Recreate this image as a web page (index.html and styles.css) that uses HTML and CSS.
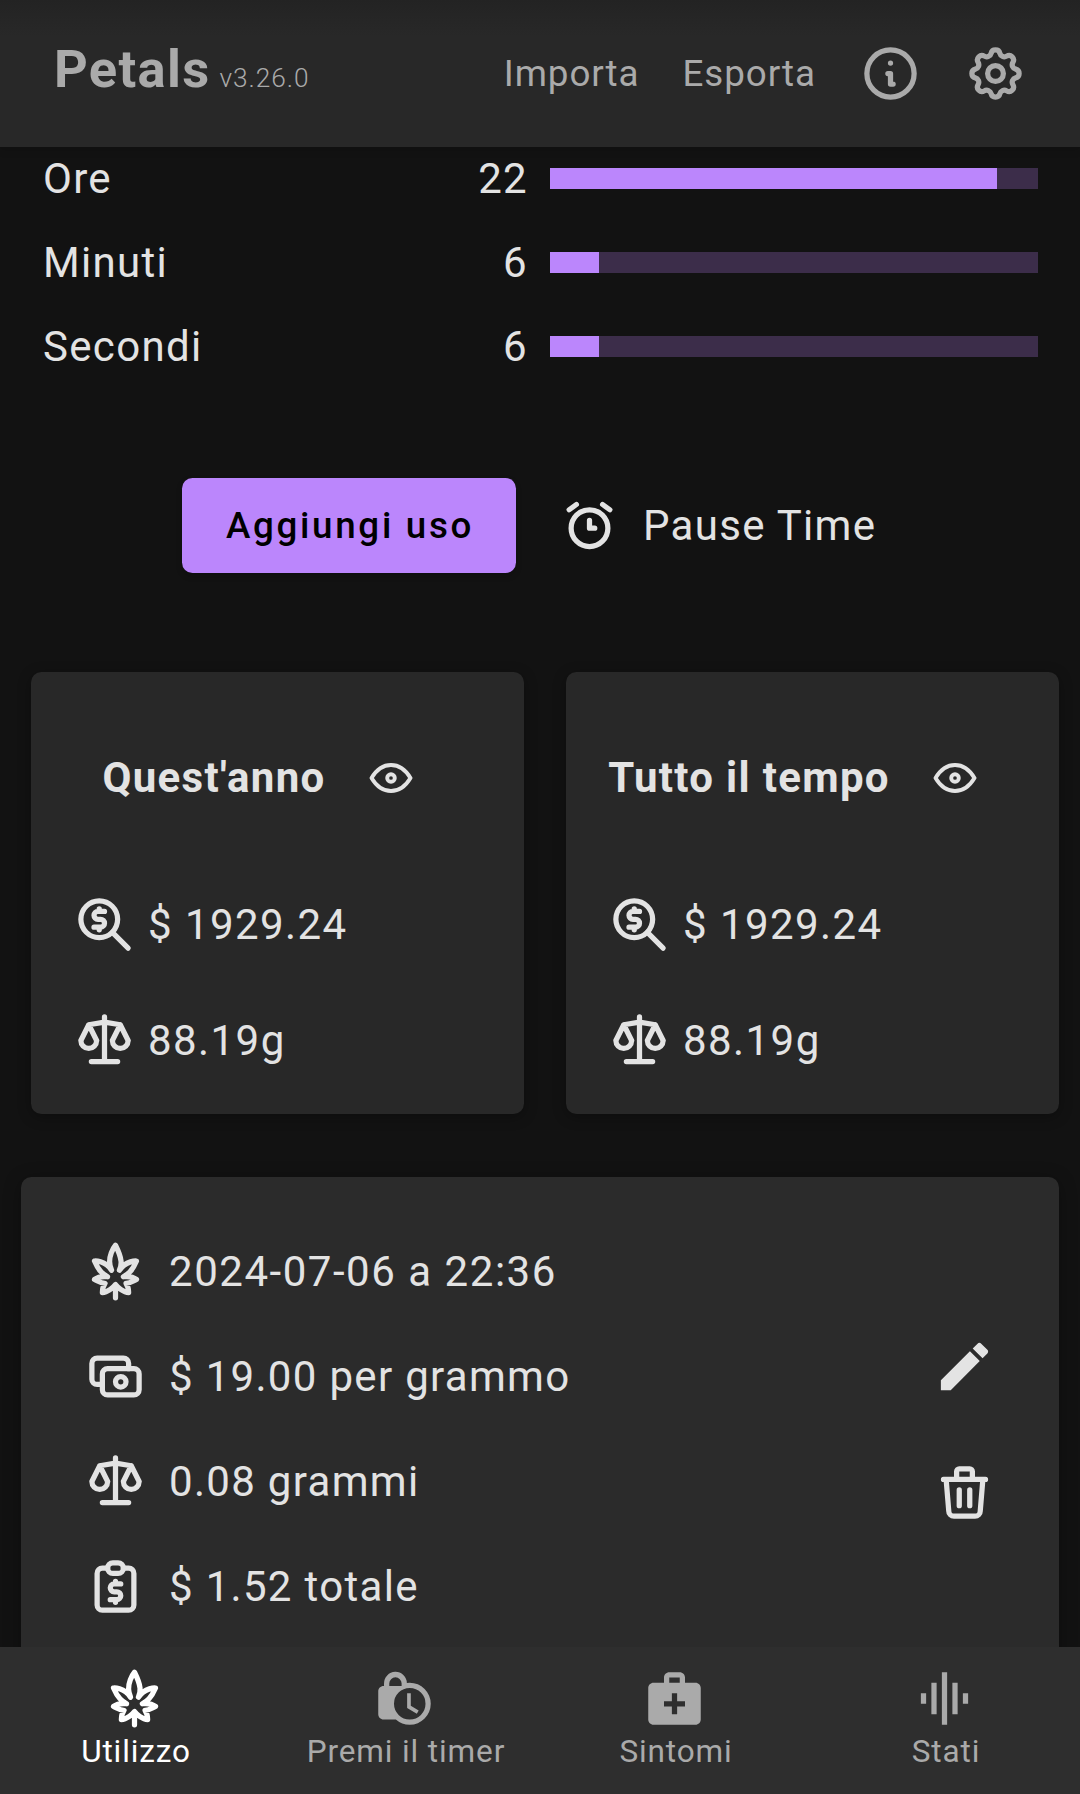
FILE: index.html
```html
<!DOCTYPE html>
<html lang="it">
<head>
<meta charset="utf-8">
<title>Petals</title>
<link rel="stylesheet" href="styles.css">
</head>
<body>
<svg class="sprite" aria-hidden="true">
  <symbol id="scale" viewBox="0 0 24 24"><path d="M7 20h10M6 6l6-1 6 1M12 3v17M9 12l-3-6-3 6a3 3 0 0 0 6 0M21 12l-3-6-3 6a3 3 0 0 0 6 0"/></symbol>
  <symbol id="leaf" viewBox="0 0 24 24"><path d="M7 20s0-2 1-3.5c-1.500 0-2-.5-4-1.500c0 0 1.839-1.380 5-1c-1.789-.97-3.279-2.030-5-6c0 0 3.980-.3 6.500 3.500c-2.284-4.900 1.500-9.500 1.500-9.500c2.734 5.470 2.389 7.500 1.500 9.500c2.531-3.770 6.500-3.500 6.500-3.500c-1.721 3.970-3.211 5.030-5 6c3.161-.38 5 1 5 1c-2 1-2.500 1.500-4 1.500c1 1.500 1 3.500 1 3.500c-2 0-4.438-2.220-5-3c-.563.78-3 3-5 3zM12 22v-5"/></symbol>
  <symbol id="zoom-money" viewBox="0 0 24 24"><circle cx="10" cy="10" r="7"/><path d="M21 21l-6-6M12 7H9.500a1.500 1.500 0 0 0 0 3h1a1.500 1.500 0 0 1 0 3H8M10 13v1M10 6v1"/></symbol>
  <symbol id="eye" viewBox="0 0 24 24"><circle cx="12" cy="12" r="1.750"/><path d="M21 12c-2.400 4-5.400 6-9 6s-6.600-2-9-6c2.400-4 5.400-6 9-6s6.600 2 9 6"/></symbol>
</svg>

<header class="topbar">
  <h1 class="brand">Petals<small class="version">v3.26.0</small></h1>
  <nav class="actions">
    <a class="action">Importa</a>
    <a class="action">Esporta</a>
    <svg class="icon" viewBox="0 0 24 24"><circle cx="12" cy="12" r="9"/><path d="M12 8h.01M11 12h1v4h1"/></svg>
    <svg class="icon" viewBox="0 0 24 24"><path d="M10.325 4.317c.426-1.756 2.924-1.756 3.350 0a1.724 1.724 0 0 0 2.573 1.066c1.543-.94 3.310.826 2.370 2.370a1.724 1.724 0 0 0 1.065 2.572c1.756.426 1.756 2.924 0 3.350a1.724 1.724 0 0 0-1.066 2.573c.94 1.543-.826 3.310-2.370 2.370a1.724 1.724 0 0 0-2.572 1.065c-.426 1.756-2.924 1.756-3.350 0a1.724 1.724 0 0 0-2.573-1.066c-1.543.94-3.310-.826-2.370-2.370a1.724 1.724 0 0 0-1.065-2.572c-1.756-.426-1.756-2.924 0-3.350a1.724 1.724 0 0 0 1.066-2.573c-.94-1.543.826-3.310 2.370-2.370c1 .608 2.296.07 2.572-1.065z"/><circle cx="12" cy="12" r="3"/></svg>
  </nav>
</header>

<main class="content">
  <section class="timer">
    <div class="timer-row"><span>Ore</span><span class="count">22</span><div class="track"><div class="fill" style="width:91.667%"></div></div></div>
    <div class="timer-row"><span>Minuti</span><span class="count">6</span><div class="track"><div class="fill" style="width:10%"></div></div></div>
    <div class="timer-row"><span>Secondi</span><span class="count">6</span><div class="track"><div class="fill" style="width:10%"></div></div></div>
  </section>

  <section class="controls">
    <button class="add" type="button">Aggiungi uso</button>
    <div class="pause">
      <svg class="icon" viewBox="0 0 24 24"><circle cx="12" cy="13" r="7"/><path d="M12 10v3h2M7 4L4.250 6M17 4l2.750 2"/></svg>
      <span>Pause Time</span>
    </div>
  </section>

  <section class="summary">
    <article class="card">
      <div class="card-head"><h2>Quest'anno</h2><svg class="icon eye"><use href="#eye"/></svg></div>
      <div class="stat"><svg class="icon"><use href="#zoom-money"/></svg><span>$ 1929.24</span></div>
      <div class="stat"><svg class="icon"><use href="#scale"/></svg><span>88.19g</span></div>
    </article>
    <article class="card">
      <div class="card-head"><h2>Tutto il tempo</h2><svg class="icon eye"><use href="#eye"/></svg></div>
      <div class="stat"><svg class="icon"><use href="#zoom-money"/></svg><span>$ 1929.24</span></div>
      <div class="stat"><svg class="icon"><use href="#scale"/></svg><span>88.19g</span></div>
    </article>
  </section>

  <article class="entry">
    <ul class="details">
      <li><svg class="icon"><use href="#leaf"/></svg><span class="date">2024-07-06 a 22:36</span></li>
      <li><svg class="icon" viewBox="0 0 24 24"><rect x="7" y="9" width="14" height="10" rx="2"/><circle cx="14" cy="14" r="2"/><path d="M17 9V7a2 2 0 0 0-2-2H5a2 2 0 0 0-2 2v6a2 2 0 0 0 2 2h2"/></svg><span>$ 19.00 per grammo</span></li>
      <li><svg class="icon"><use href="#scale"/></svg><span>0.08 grammi</span></li>
      <li><svg class="icon" viewBox="0 0 24 24"><path d="M9 5H7a2 2 0 0 0-2 2v12a2 2 0 0 0 2 2h10a2 2 0 0 0 2-2V7a2 2 0 0 0-2-2h-2"/><rect x="9" y="3" width="6" height="4" rx="2"/><path d="M14 11h-2.500a1.500 1.500 0 0 0 0 3h1a1.500 1.500 0 0 1 0 3H10M12 17v1M12 10v1"/></svg><span>$ 1.52 totale</span></li>
    </ul>
    <div class="entry-actions">
      <svg class="icon solid" viewBox="0 0 24 24"><path d="M3 17.250V21h3.750L17.810 9.940l-3.750-3.750L3 17.250zM20.710 7.040c.39-.39.39-1.020 0-1.410l-2.340-2.340c-.39-.39-1.020-.39-1.410 0l-1.830 1.830 3.750 3.750 1.830-1.830z"/></svg>
      <svg class="icon" viewBox="0 0 24 24"><path d="M4 7h16M10 11v6M14 11v6M5 7l1 12a2 2 0 0 0 2 2h8a2 2 0 0 0 2-2l1-12M9 7V4a1 1 0 0 1 1-1h4a1 1 0 0 1 1 1v3"/></svg>
    </div>
  </article>
</main>

<nav class="tabs">
  <a class="tab active"><svg class="icon"><use href="#leaf"/></svg><span>Utilizzo</span></a>
  <a class="tab"><svg class="icon solid" viewBox="0 0 24 24"><path fill-rule="evenodd" d="M14 6a8 8 0 1 1 0 16 8 8 0 0 1-5.300-2H4c-1.100 0-2-.9-2-2V9.200c0-1.100.9-2 2-2h.2V6.300a4.350 4.350 0 0 1 8.700-.2A8 8 0 0 1 14 6zM6.200 7.200h4.700v-.9a2.350 2.350 0 0 0-4.700 0zM14 8a6 6 0 1 0 0 12 6 6 0 0 0 0-12z"/><path d="M13 10h1.400v4.800l3 1.800-.7 1.200-3.700-2.200z"/></svg><span>Premi il timer</span></a>
  <a class="tab"><svg class="icon solid" viewBox="0 0 24 24"><path fill-rule="evenodd" d="M20 6h-4V4c0-1.100-.9-2-2-2h-4c-1.100 0-2 .9-2 2v2H4c-1.100 0-2 .9-2 2v12c0 1.100.9 2 2 2h16c1.100 0 2-.9 2-2V8c0-1.100-.9-2-2-2zM10 4h4v2h-4zM16 15h-3v3h-2v-3H8v-2h3v-3h2v3h3z"/></svg><span>Sintomi</span></a>
  <a class="tab"><svg class="icon solid" viewBox="0 0 24 24"><path d="M7 18h2V6H7v12zm4 4h2V2h-2v20zm-8-8h2v-4H3v4zm12 4h2V6h-2v12zm4-8v4h2v-4h-2z"/></svg><span>Stati</span></a>
</nav>
</body>
</html>
```

FILE: styles.css
```css
* { box-sizing: border-box; }

body {
  margin: 0;
  height: 1794px;
  display: flex;
  flex-direction: column;
  overflow: hidden;
  background: #121212;
  color: #e3e3e3;
  font-family: Roboto, "Liberation Sans", sans-serif;
  font-size: 42px;
  line-height: 63px;
  letter-spacing: 0.03125em;
}

h1, h2, ul { margin: 0; padding: 0; list-style: none; }

.sprite { display: none; }

.icon {
  display: block;
  flex: none;
  width: 63px;
  height: 63px;
  fill: none;
  stroke: currentColor;
  stroke-width: 2;
  stroke-linecap: round;
  stroke-linejoin: round;
}
.icon.solid { fill: currentColor; stroke: none; }

.topbar {
  flex: none;
  height: 147px;
  display: flex;
  justify-content: space-between;
  padding: 0 53px 0 54px;
  background: linear-gradient(#232323, #282828 36px);
  color: #aaa;
  position: relative;
  z-index: 1;
  box-shadow: 0 3px 8px rgba(0, 0, 0, 0.15);
}
.brand {
  font-size: 52.5px;
  font-weight: 700;
  line-height: 138px;
}
.version {
  margin-left: 9px;
  font-size: 26.25px;
  font-weight: 300;
  letter-spacing: 0.95px;
}
.actions { display: flex; align-items: center; }
.action { margin-right: 43px; font-size: 36.75px; letter-spacing: 0.95px; }
.actions .icon + .icon { margin-left: 42px; }

.content {
  flex: 1;
  min-height: 0;
  margin-top: -10.5px;
  overflow: hidden;
}

.timer-row {
  display: grid;
  grid-template-columns: 1fr auto 488px;
  align-items: center;
  height: 84px;
  padding: 0 42px 0 43px;
}
.count { margin-right: 22px; }
.track { height: 21px; background: #3c2d4a; }
.fill { height: 100%; background: #bb86fc; }

.controls {
  display: flex;
  align-items: center;
  margin-top: 89.500px;
  padding-left: 182px;
}
.add {
  width: 334px;
  height: 95px;
  padding: 0 0 0 2px;
  border: 0;
  border-radius: 10.5px;
  background: #bb86fc;
  color: #000;
  font: 500 36.75px/63px Roboto, sans-serif;
  letter-spacing: 2.7px;
  box-shadow: 0 3px 6px rgba(0, 0, 0, 0.2);
}
.pause { display: flex; align-items: center; gap: 22px; margin-left: 42px; }

.summary {
  display: grid;
  grid-template-columns: 1fr 1fr;
  gap: 42px;
  margin: 99px 21px 0 31px;
}
.card {
  height: 442px;
  padding: 74px 42px 0;
  border-radius: 10.5px;
  background: #282828;
  box-shadow: 0 3px 14px rgba(0, 0, 0, 0.3);
}
.card-head {
  display: flex;
  align-items: center;
  justify-content: center;
  gap: 39px;
  margin-bottom: 84px;
  padding-right: 36px;
}
.card-head h2 { font-size: 42px; font-weight: 700; white-space: nowrap; }
.icon.eye { width: 52px; height: 52px; stroke-width: 1.8; }
.stat { display: flex; align-items: center; gap: 12px; margin-bottom: 53px; letter-spacing: 1.43px; }

.entry {
  display: flex;
  justify-content: space-between;
  height: 600px;
  margin: 63px 21px 0;
  padding: 63px;
  border-radius: 10.5px;
  background: #2b2b2b;
  box-shadow: 0 3px 18px rgba(0, 0, 0, 0.3);
}
.details li {
  display: flex;
  align-items: center;
  gap: 22px;
  margin-bottom: 42px;
}
.details .date { letter-spacing: 1.53px; }
.entry-actions {
  display: flex;
  flex-direction: column;
  gap: 63px;
  padding-top: 95px;
}

.tabs {
  flex: none;
  height: 147px;
  display: grid;
  grid-template-columns: repeat(4, 1fr);
  background: #2e2e2e;
  color: #aaa;
  font-size: 31.5px;
  line-height: 43px;
  letter-spacing: 0.88px;
}
.tab {
  display: flex;
  flex-direction: column;
  align-items: center;
  padding-top: 20px;
}
.tab .icon { margin-right: 1px; }
.tab span { padding-left: 2px; }
.tab.active { color: #fff; }
```
